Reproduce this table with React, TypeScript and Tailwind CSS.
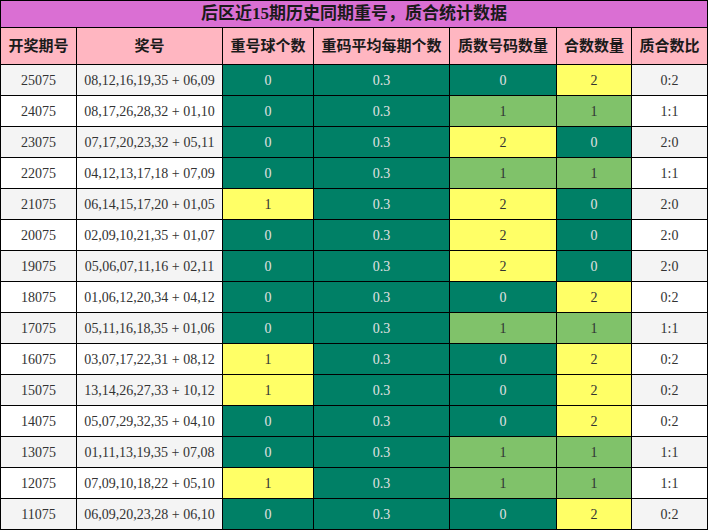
import React from "react";

type Row = [string, string, number, number, number, string];

const rows: Row[] = [
  ["25075", "08,12,16,19,35 + 06,09", 0, 0, 2, "0:2"],
  ["24075", "08,17,26,28,32 + 01,10", 0, 1, 1, "1:1"],
  ["23075", "07,17,20,23,32 + 05,11", 0, 2, 0, "2:0"],
  ["22075", "04,12,13,17,18 + 07,09", 0, 1, 1, "1:1"],
  ["21075", "06,14,15,17,20 + 01,05", 1, 2, 0, "2:0"],
  ["20075", "02,09,10,21,35 + 01,07", 0, 2, 0, "2:0"],
  ["19075", "05,06,07,11,16 + 02,11", 0, 2, 0, "2:0"],
  ["18075", "01,06,12,20,34 + 04,12", 0, 0, 2, "0:2"],
  ["17075", "05,11,16,18,35 + 01,06", 0, 1, 1, "1:1"],
  ["16075", "03,07,17,22,31 + 08,12", 1, 0, 2, "0:2"],
  ["15075", "13,14,26,27,33 + 10,12", 1, 0, 2, "0:2"],
  ["14075", "05,07,29,32,35 + 04,10", 0, 0, 2, "0:2"],
  ["13075", "01,11,13,19,35 + 07,08", 0, 1, 1, "1:1"],
  ["12075", "07,09,10,18,22 + 05,10", 1, 1, 1, "1:1"],
  ["11075", "06,09,20,23,28 + 06,10", 0, 0, 2, "0:2"],
];

const TEAL = "bg-[#008066] text-[#e2e2e2]";
const YELLOW = "bg-[#ffff66] text-[#333333]";
const GREEN = "bg-[#80c26a] text-[#333333]";

function colorFor(v: number) {
  if (v === 0) return TEAL;
  if (v === 1) return GREEN;
  return YELLOW;
}

export default function App() {
  const cell = "flex items-center justify-center";
  const headers = ["开奖期号", "奖号", "重号球个数", "重码平均每期个数", "质数号码数量", "合数数量", "质合数比"];
  return (
    <div
      className="w-[708px] h-[530px] bg-black p-px grid gap-px grid-cols-[75px_145px_90px_135px_106px_74px_75px] grid-rows-[26px_36px_repeat(15,30px)] text-[14px] text-[#333333]"
      style={{ fontFamily: '"Liberation Serif", "Noto Sans CJK SC", serif' }}
    >
      <div className={`${cell} col-span-7 bg-[#da6fd3] text-[17px] font-bold text-[#1a1a1a]`}>
        后区近15期历史同期重号，质合统计数据
      </div>
      {headers.map((h) => (
        <div key={h} className={`${cell} bg-[#ffb6c1] text-[15px] font-bold text-[#1a1a1a]`}>
          {h}
        </div>
      ))}
      {rows.map((r, i) => {
        const base = i % 2 === 0 ? "bg-[#f4f4f4]" : "bg-white";
        const repeat = r[2] === 1 ? YELLOW : TEAL;
        return (
          <React.Fragment key={r[0]}>
            <div className={`${cell} ${base}`}>{r[0]}</div>
            <div className={`${cell} ${base}`}>{r[1]}</div>
            <div className={`${cell} ${repeat}`}>{r[2]}</div>
            <div className={`${cell} ${TEAL}`}>0.3</div>
            <div className={`${cell} ${colorFor(r[3])}`}>{r[3]}</div>
            <div className={`${cell} ${colorFor(r[4])}`}>{r[4]}</div>
            <div className={`${cell} ${base}`}>{r[5]}</div>
          </React.Fragment>
        );
      })}
    </div>
  );
}
